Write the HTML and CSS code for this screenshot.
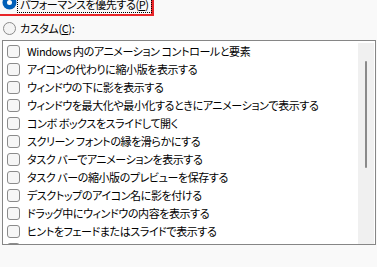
FILE: index.html
```html
<!DOCTYPE html>
<html lang="ja">
<head>
    <meta charset="UTF-8">
    <title>パフォーマンス オプション</title>
    <link rel="stylesheet" href="styles.css">
</head>
<body>
    <div class="page">
        <div class="focus-mark">
            <label class="radio-row">
                <span class="radio checked"></span>
                <span class="label focused">パフォーマンスを優先する(<u>P</u>)</span>
            </label>
        </div>
        <label class="radio-row custom">
            <span class="radio"></span>
            <span class="label">カスタム(<u>C</u>):</span>
        </label>

        <div class="list">
            <ul class="items">
                <li><span class="check"></span>Windows 内のアニメーション コントロールと要素</li>
                <li><span class="check"></span>アイコンの代わりに縮小版を表示する</li>
                <li><span class="check"></span>ウィンドウの下に影を表示する</li>
                <li><span class="check"></span>ウィンドウを最大化や最小化するときにアニメーションで表示する</li>
                <li><span class="check"></span>コンボ ボックスをスライドして開く</li>
                <li><span class="check"></span>スクリーン フォントの縁を滑らかにする</li>
                <li><span class="check"></span>タスク バーでアニメーションを表示する</li>
                <li><span class="check"></span>タスク バーの縮小版のプレビューを保存する</li>
                <li><span class="check"></span>デスクトップのアイコン名に影を付ける</li>
                <li><span class="check"></span>ドラッグ中にウィンドウの内容を表示する</li>
                <li><span class="check"></span>ヒントをフェードまたはスライドで表示する</li>
                <li><span class="check"></span>ピークを有効にする</li>
            </ul>
            <div class="scrollbar"><div class="thumb"></div></div>
        </div>
    </div>
</body>
</html>
```

FILE: styles.css
```css
body {
    margin: 0;
    background: #f9f9f9;
    font-family: "Noto Sans CJK JP", "Noto Sans", sans-serif;
    font-size: 11px;
    letter-spacing: -0.4px;
    font-feature-settings: "palt";
    color: #000;
    overflow: hidden;
}

.page {
    width: 377px;
    height: 267px;
    overflow: hidden;
}

/* red annotation box around the first option, cut off at the top-left */
.focus-mark {
    width: 148px;
    height: 30px;
    margin: -18px 0 0 -10px;
    padding: 0 0 0 11px;
    border: 2px solid #e8262a;
    border-right-width: 3px;
    display: flex;
    align-items: flex-end;
}

.focus-mark .radio-row {
    margin-bottom: 2px;
    padding-left: 0;
}

.focus-mark .radio {
    margin-bottom: 3px;
}

.radio-row {
    display: flex;
    align-items: center;
    height: 16px;
    padding-left: 3px;
}

.radio-row.custom {
    margin-top: 4px;
}

.radio {
    width: 11px;
    height: 11px;
    border-radius: 50%;
    border: 1px solid #8a8a8a;
    background: #f4f4f4;
    flex: none;
}

.radio.checked {
    width: 5px;
    height: 5px;
    border: 4px solid #005fb8;
    background: #fff;
    box-shadow: 0 0 0 0.5px #005fb8;
}

.label {
    margin-left: 2px;
    padding: 0 2px;
    line-height: 16px;
    white-space: nowrap;
}

.label.focused {
    outline: 1px dotted #000;
}

.list {
    display: flex;
    height: 203px;
    margin: 4px 1px 0 2px;
    border: 1px solid #868686;
    background: #fff;
    overflow: hidden;
}

.items {
    flex: 1;
    list-style: none;
    margin: 1px 0 0;
    padding: 0;
}

.items li {
    display: flex;
    align-items: center;
    height: 18px;
    padding-left: 4px;
    white-space: nowrap;
}

.check {
    width: 11px;
    height: 11px;
    margin-right: 7px;
    border: 1px solid #8b8b8b;
    border-radius: 3px;
    background: #f6f6f6;
    flex: none;
}

.scrollbar {
    width: 16px;
    margin: 2px 1px 0 0;
    background: #f0f0f0;
    position: relative;
    flex: none;
}

.thumb {
    position: absolute;
    left: 7px;
    top: 18px;
    width: 2px;
    height: 107px;
    border-radius: 1px;
    background: #8a8a8a;
}
```
